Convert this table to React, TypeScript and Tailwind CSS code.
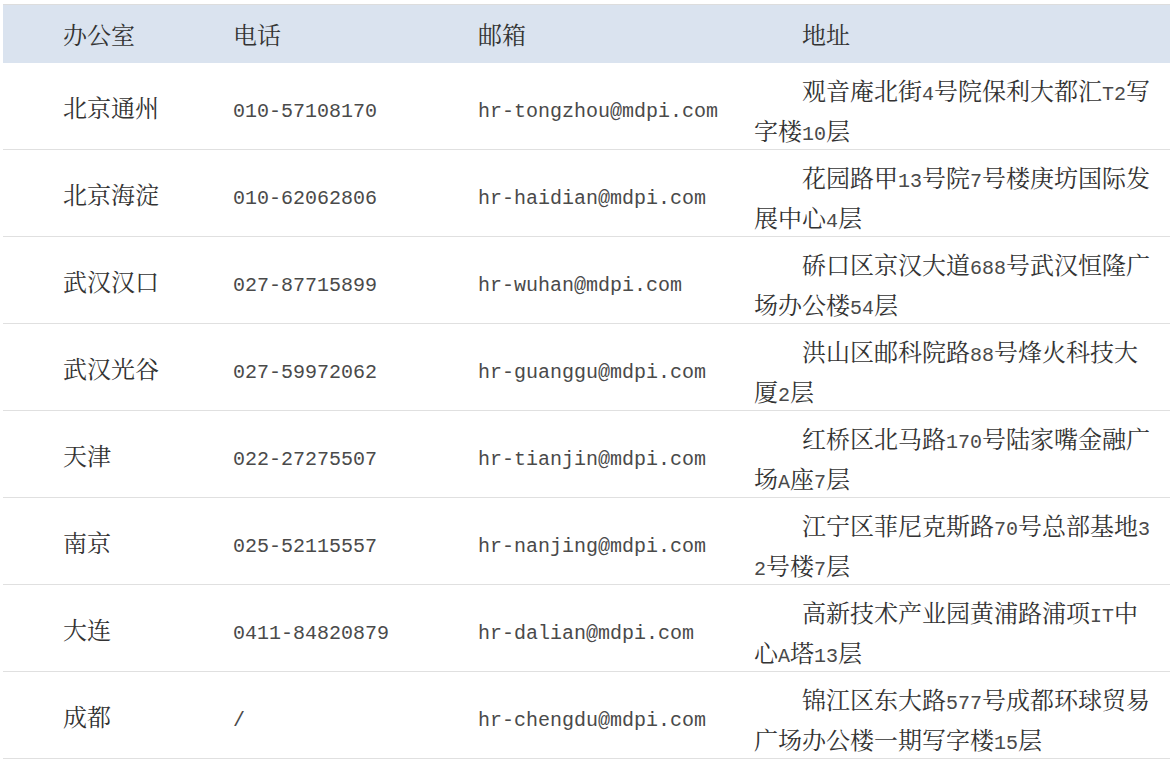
import React from 'react';

type Office = {
  name: string;
  phone: string;
  email: string;
  address: string;
};

const offices: Office[] = [
  { name: '北京通州', phone: '010-57108170', email: 'hr-tongzhou@mdpi.com', address: '观音庵北街4号院保利大都汇T2写字楼10层' },
  { name: '北京海淀', phone: '010-62062806', email: 'hr-haidian@mdpi.com', address: '花园路甲13号院7号楼庚坊国际发展中心4层' },
  { name: '武汉汉口', phone: '027-87715899', email: 'hr-wuhan@mdpi.com', address: '硚口区京汉大道688号武汉恒隆广场办公楼54层' },
  { name: '武汉光谷', phone: '027-59972062', email: 'hr-guanggu@mdpi.com', address: '洪山区邮科院路88号烽火科技大厦2层' },
  { name: '天津', phone: '022-27275507', email: 'hr-tianjin@mdpi.com', address: '红桥区北马路170号陆家嘴金融广场A座7层' },
  { name: '南京', phone: '025-52115557', email: 'hr-nanjing@mdpi.com', address: '江宁区菲尼克斯路70号总部基地32号楼7层' },
  { name: '大连', phone: '0411-84820879', email: 'hr-dalian@mdpi.com', address: '高新技术产业园黄浦路浦项IT中心A塔13层' },
  { name: '成都', phone: '/', email: 'hr-chengdu@mdpi.com', address: '锦江区东大路577号成都环球贸易广场办公楼一期写字楼15层' },
];

// latin runs get a half-width mono face so they sit like SimSun's ascii
function Mixed({ text }: { text: string }) {
  const parts = text.match(/[\x00-\x7f]+|[^\x00-\x7f]+/g) ?? [];
  return (
    <>
      {parts.map((p, i) =>
        /^[\x00-\x7f]/.test(p) ? (
          <span key={i} className="font-['Liberation_Mono',monospace] text-[20px] leading-none text-[#4a4a4a]">
            {p}
          </span>
        ) : (
          <span key={i}>{p}</span>
        )
      )}
    </>
  );
}

const cols = 'grid grid-cols-[230px_245px_276px_416px]';

export default function App() {
  return (
    <div className="min-h-[765px] w-[1175px] bg-white pt-[4px] font-['Noto_Serif_CJK_SC','Noto_Sans_CJK_SC',serif] text-[24px] leading-[40px] text-[#333]">
      <div className="ml-[3px] w-[1167px] border-t border-[#dddddd]">
        {/* Header */}
        <div className={`${cols} h-[58px] items-center bg-[#dae3ef]`}>
          <div className="pl-[60px]">办公室</div>
          <div>电话</div>
          <div>邮箱</div>
          <div className="pr-[16px] indent-[48px]">地址</div>
        </div>

        {/* Rows */}
        {offices.map((o) => (
          <div key={o.name} className={`${cols} h-[87px] items-center border-b border-[#e0e0e0]`}>
            <div className="pl-[60px]">{o.name}</div>
            <div>
              <Mixed text={o.phone} />
            </div>
            <div>
              <Mixed text={o.email} />
            </div>
            <div className="pr-[16px] pt-[7px] indent-[48px] break-all">
              <Mixed text={o.address} />
            </div>
          </div>
        ))}
      </div>
    </div>
  );
}
